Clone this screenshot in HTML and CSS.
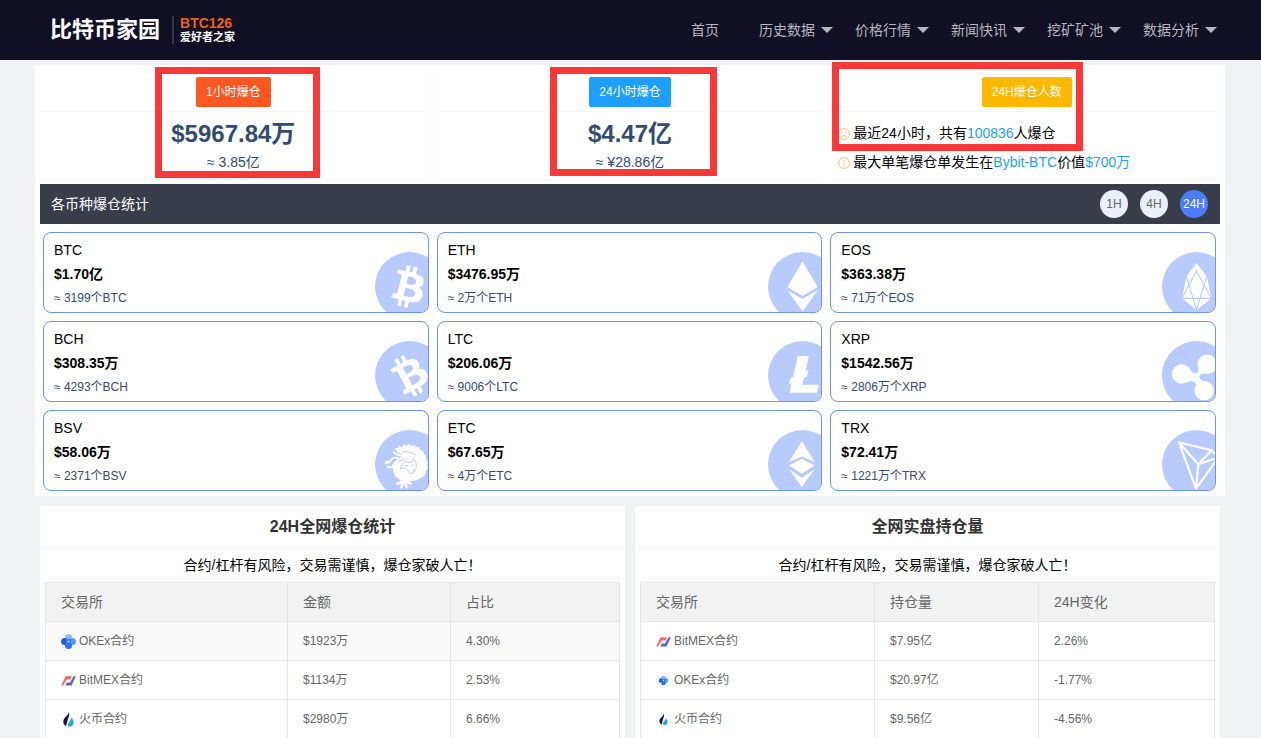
FILE: index.html
```html
<!DOCTYPE html>
<html lang="zh-CN">
<head>
<meta charset="utf-8">
<meta name="viewport" content="width=device-width, initial-scale=1">
<title>比特币家园</title>
<link rel="stylesheet" href="styles.css">
</head>
<body>
<svg class="defs" aria-hidden="true">
  <symbol id="btc" viewBox="0 0 32 32"><path d="M23.189 14.02c.314-2.096-1.283-3.223-3.465-3.975l.708-2.84-1.728-.43-.69 2.765c-.454-.114-.92-.22-1.385-.326l.695-2.783L15.596 6l-.708 2.839c-.376-.086-.746-.17-1.104-.26l.002-.009-2.384-.595-.46 1.846s1.283.294 1.256.312c.7.175.826.638.805 1.006l-.806 3.235c.048.012.11.03.18.057l-.183-.045-1.13 4.532c-.086.212-.303.531-.793.41.018.025-1.256-.313-1.256-.313l-.858 1.978 2.25.561c.418.105.828.215 1.231.318l-.715 2.872 1.727.43.708-2.84c.472.127.93.245 1.378.357l-.706 2.828 1.728.43.715-2.866c2.948.558 5.164.333 6.097-2.333.752-2.146-.037-3.385-1.588-4.192 1.13-.26 1.98-1.003 2.207-2.538zm-3.95 5.538c-.533 2.147-4.148.986-5.32.695l.95-3.805c1.172.293 4.929.872 4.37 3.11zm.535-5.569c-.487 1.953-3.495.96-4.47.717l.86-3.45c.975.243 4.118.696 3.61 2.733z"/></symbol>
  <symbol id="okex" viewBox="0 0 15 15"><circle cx="7.5" cy="3.6" r="3.5" fill="#86bbf8"/><circle cx="11.4" cy="7.5" r="3.5" fill="#5a94f4"/><circle cx="3.6" cy="7.5" r="3.5" fill="#1f5be8"/><circle cx="7.5" cy="11.4" r="3.5" fill="#2a76f8"/><path d="M5 5h5v5H5z" fill="#3577ee"/><circle cx="7.5" cy="7.5" r="1" fill="#d8e8fd"/></symbol>
  <symbol id="bitmex" viewBox="0 0 15 15"><path d="M.2 12.6 4.600 3.200h6.200L9.400 6.400H5.800L2 12.600z" fill="#ed6b6e"/><path d="M14.800 3.200 10.600 12.600H4.400l1.400-3H9L12.600 3.200z" fill="#5a69b3"/></symbol>
  <symbol id="huobi" viewBox="0 0 15 15"><path d="M7.8 0C8.6 2 8.2 3.6 7.6 5c-1 2.600-1.300 5.600-2.600 9C2.400 12.700 1.600 9.600 3 7c1.200-2.400 4.600-3.800 4.800-7z" fill="#171c3d"/><path d="M10.200 5.600c2.400 2.400 3 4.400 2.200 6.600-.7 1.700-2.300 2.600-4.800 2.500-1.300-1.700-.9-3.200.5-4.700 1.300-1.300 1.900-2.400 2.100-4.400z" fill="#2ba6de"/></symbol>
</svg>

<header class="topbar">
  <a class="logo" href="#">
    <span class="logo-name">比特币家园</span>
    <span class="logo-side"><span class="logo-code">BTC126</span><span class="logo-tag">爱好者之家</span></span>
  </a>
  <nav class="nav">
    <a class="home" href="#">首页</a>
    <a class="drop" href="#">历史数据</a>
    <a class="drop" href="#">价格行情</a>
    <a class="drop" href="#">新闻快讯</a>
    <a class="drop" href="#">挖矿矿池</a>
    <a class="drop" href="#">数据分析</a>
  </nav>
</header>

<main class="page">
  <section class="overview">
    <div class="stats">
      <article class="card stat">
        <div class="card-head"><button class="badge orange" type="button">1小时爆仓</button></div>
        <div class="stat-body"><strong class="amount">$5967.84万</strong><span class="approx">≈ 3.85亿</span></div>
        <span class="mark mark-one"></span>
      </article>
      <article class="card stat">
        <div class="card-head"><button class="badge blue" type="button">24小时爆仓</button></div>
        <div class="stat-body"><strong class="amount">$4.47亿</strong><span class="approx">≈ ¥28.86亿</span></div>
        <span class="mark mark-two"></span>
      </article>
      <article class="card stat">
        <div class="card-head"><button class="badge yellow" type="button">24H爆仓人数</button></div>
        <div class="stat-body notes">
          <p class="note"><svg class="note-icon" viewBox="0 0 12 12"><circle cx="6" cy="6" r="5.400"/><path d="M3.200 4.400h1.400M7.400 4.400h1.400M3.500 8.800Q6 5.800 8.500 8.800"/></svg><span>最近24小时，共有<em>100836</em>人爆仓</span></p>
          <p class="note"><svg class="note-icon" viewBox="0 0 12 12"><circle cx="6" cy="6" r="5.400"/><path d="M6 3v1M6 5.200v4"/></svg><span>最大单笔爆仓单发生在<em>Bybit-BTC</em>价值<em>$700万</em></span></p>
        </div>
        <span class="mark mark-three"></span>
      </article>
    </div>

    <div class="bar">
      <h2 class="bar-title">各币种爆仓统计</h2>
      <div class="periods">
        <button class="period" type="button">1H</button>
        <button class="period" type="button">4H</button>
        <button class="period active" type="button">24H</button>
      </div>
    </div>

    <div class="coins">
      <article class="coin"><h3>BTC</h3><strong>$1.70亿</strong><p>≈ 3199个BTC</p>
        <svg class="coin-icon" viewBox="0 0 32 32"><circle class="disc" cx="16" cy="16" r="16"/><use href="#btc" x="-0.7" width="32" height="32"/></svg></article>
      <article class="coin"><h3>ETH</h3><strong>$3476.95万</strong><p>≈ 2万个ETH</p>
        <svg class="coin-icon" viewBox="0 0 32 32"><circle class="disc" cx="16" cy="16" r="16"/><path d="M16 4.400 23 16.200 16 20.400 9 16.200zM9 17.700l7 4.100 7-4.100L16 27.600z"/></svg></article>
      <article class="coin"><h3>EOS</h3><strong>$363.38万</strong><p>≈ 71万个EOS</p>
        <svg class="coin-icon" viewBox="0 0 32 32"><circle class="disc" cx="16" cy="16" r="16"/><path d="M16 5.100 20.800 11.200 22.900 21.500 16 26.900 9.300 21.500 11.300 11.200z"/><path class="cut" d="M9.300 21.500 16 8.800l6.900 12.700zM11.300 11.200 16 26.900l4.800-15.700"/></svg></article>
      <article class="coin"><h3>BCH</h3><strong>$308.35万</strong><p>≈ 4293个BCH</p>
        <svg class="coin-icon" viewBox="0 0 32 32"><circle class="disc" cx="16" cy="16" r="16"/><g transform="rotate(-42 16 16)"><use href="#btc" width="32" height="32"/></g></svg></article>
      <article class="coin"><h3>LTC</h3><strong>$206.06万</strong><p>≈ 9006个LTC</p>
        <svg class="coin-icon" viewBox="0 0 32 32"><circle class="disc" cx="16" cy="16" r="16"/><path d="M11 19.500 9.600 20.100l.7-2.800 1.400-.6L13.800 7h5.100l-1.500 7.200 1.400-.6-.7 2.800-1.400.6-.8 3.300h7.700L22.700 24H9.900z"/></svg></article>
      <article class="coin"><h3>XRP</h3><strong>$1542.56万</strong><p>≈ 2806万个XRP</p>
        <svg class="coin-icon" viewBox="0 0 32 32"><circle class="disc" cx="16" cy="16" r="16"/><circle cx="9.100" cy="15.300" r="4.500"/><circle cx="21" cy="10.800" r="4.500"/><circle cx="19.500" cy="23" r="4.500"/><path d="M12.200 12.200c1.600 3.200 3.800 3 4.500 1.900.5-.9-.2-2 .3-3.500l3.500 4.200c-2.600.2-3.400 1.200-3 2.400.5 1.600 2 1.200 3.600 1.700l-5.300 4c.7-3-.3-4-2-4.400-1.500-.1-1.500 1-3 .5z"/></svg></article>
      <article class="coin"><h3>BSV</h3><strong>$58.06万</strong><p>≈ 2371个BSV</p>
        <svg class="coin-icon" viewBox="0 0 69 69"><circle class="disc" cx="34.500" cy="34.500" r="34.500"/>
          <path d="M20 18l3 0 1-2 3 1 2-3 2 2 3-2 2 2 3-1 2 2 3 0 1 3 3 1 1 3 2 2 0 3 2 3-1 3 1 3-2 3-1 4-4 3-4 2-6 1-7 0-5-2-4-3-2-5 0-4 3-6 5-4 3-1-2-2-5-2z"/>
          <path d="M27 46l6 0-1 4 5 3-1 2-4-2 1 4-2 2-2-5-2 5-2-1 1-4-5 1 0-2 5-2-3-3 4 0z"/>
          <path class="cut heavy" d="M24 31c2 0 4-1 5-3M27 35c0-3 3-4 5-3l3 1 4-4 2 4c1 4 0 8-3 10M27 35l-2 4 4-1c3 0 4 3 6 6l3-1 1-4M30 35l3 1M36 36l2-1M27 22c6-1 10 1 14 3"/>
          <path class="line" d="M24 29c-4-2-6-2-8 1-1 3-5 1-6 4M24 31c-3 0-5 2-6 5-2 3-5 1-6 0M11 31c0 2 2 2 4 1M18 22c4 3 8 4 12 4"/></svg></article>
      <article class="coin"><h3>ETC</h3><strong>$67.65万</strong><p>≈ 4万个ETC</p>
        <svg class="coin-icon" viewBox="0 0 32 32"><circle class="disc" cx="16" cy="16" r="16"/><path d="M15.700 5.100 21.600 14.700 15.700 12.300 9.800 14.700zM15.700 13.300 21.600 16.500 15.700 20.300 9.800 16.500zM9.800 18.200l5.900 4 5.900-4-5.900 8.200z"/></svg></article>
      <article class="coin"><h3>TRX</h3><strong>$72.41万</strong><p>≈ 1221万个TRX</p>
        <svg class="coin-icon" viewBox="0 0 32 32"><circle class="disc" cx="16" cy="16" r="16"/><path class="line thin" d="M7.900 5.800 23 9.400 26.200 12.700 15.800 27.200zL16.800 15.900 15.800 27.200M23 9.400 16.800 15.900 26.200 12.700"/></svg></article>
    </div>
  </section>

  <div class="panels">
    <section class="card panel">
      <h2 class="panel-title">24H全网爆仓统计</h2>
      <div class="panel-body">
        <p class="warning">合约/杠杆有风险，交易需谨慎，爆仓家破人亡！</p>
        <table class="table liquidations">
          <thead><tr><th>交易所</th><th>金额</th><th>占比</th></tr></thead>
          <tbody>
            <tr class="hovered"><td><span class="exchange"><svg><use href="#okex"/></svg>OKEx合约</span></td><td>$1923万</td><td>4.30%</td></tr>
            <tr><td><span class="exchange"><svg><use href="#bitmex"/></svg>BitMEX合约</span></td><td>$1134万</td><td>2.53%</td></tr>
            <tr><td><span class="exchange"><svg><use href="#huobi"/></svg>火币合约</span></td><td>$2980万</td><td>6.66%</td></tr>
          </tbody>
        </table>
      </div>
    </section>
    <section class="card panel">
      <h2 class="panel-title">全网实盘持仓量</h2>
      <div class="panel-body">
        <p class="warning">合约/杠杆有风险，交易需谨慎，爆仓家破人亡！</p>
        <table class="table positions">
          <thead><tr><th>交易所</th><th>持仓量</th><th>24H变化</th></tr></thead>
          <tbody>
            <tr><td><span class="exchange"><svg><use href="#bitmex"/></svg>BitMEX合约</span></td><td>$7.95亿</td><td>2.26%</td></tr>
            <tr><td><span class="exchange"><svg viewBox="0 0 15 15"><circle class="ring" cx="7.500" cy="7.500" r="7"/><use href="#okex" x="2.500" y="2.500" width="10" height="10"/></svg>OKEx合约</span></td><td>$20.97亿</td><td>-1.77%</td></tr>
            <tr><td><span class="exchange"><svg viewBox="0 0 15 15"><circle class="ring" cx="7.500" cy="7.500" r="7"/><use href="#huobi" x="1.500" y="1.500" width="12" height="12"/></svg>火币合约</span></td><td>$9.56亿</td><td>-4.56%</td></tr>
          </tbody>
        </table>
      </div>
    </section>
  </div>
</main>
</body>
</html>
```
FILE: styles.css
```css
* { box-sizing: border-box; }

body {
  margin: 0;
  background: #f0f2f4;
  color: #000;
  font: 14px/24px "Liberation Sans", "Noto Sans CJK SC", sans-serif;
}

h2, h3, p { margin: 0; font-size: 14px; font-weight: 400; }
a { color: inherit; text-decoration: none; }
button { border: 0; font-family: inherit; cursor: pointer; }
.defs { position: absolute; width: 0; height: 0; }

/* header */
.topbar {
  display: flex;
  align-items: center;
  justify-content: space-between;
  height: 60px;
  padding: 0 44px 0 50px;
  background: #110f24;
}
.logo { display: flex; align-items: center; gap: 12px; color: #fff; }
.logo-name { font-size: 22px; font-weight: 700; }
.logo-side {
  display: flex;
  flex-direction: column;
  padding-left: 6px;
  border-left: 2px solid #35334a;
  font-weight: 700;
}
.logo-code { color: #e8630c; font-size: 14px; line-height: 14px; }
.logo-tag { font-size: 11px; line-height: 14px; }
.nav { display: flex; gap: 22px; color: #b8b7bd; }
.home { margin-right: 18px; }
.drop { display: flex; align-items: center; gap: 6px; }
.drop::after {
  content: "";
  border: 6px solid transparent;
  border-top-color: currentColor;
  border-bottom: 0;
}

.page { margin: 0 36px 0 35px; padding-top: 5px; }
.overview { padding: 5px; background: #fff; }

/* summary cards */
.card { border-radius: 2px; background: #fff; box-shadow: 0 1px 2px rgba(0, 0, 0, .05); }
.stats { display: grid; grid-template-columns: repeat(3, 1fr); gap: 10px; margin-bottom: 5px; }
.stat { position: relative; height: 109px; }
.card-head {
  display: flex;
  align-items: center;
  justify-content: center;
  height: 42px;
  padding-top: 3px;
  border-bottom: 1px solid #f6f6f6;
}
.badge {
  height: 30px;
  padding: 0 10px;
  border-radius: 2px;
  color: #fff;
  font-size: 12px;
  line-height: 30px;
}
.orange { background: #ff5722; }
.blue { background: #1e9fff; }
.yellow { background: #ffb800; }
.stat-body {
  display: flex;
  flex-direction: column;
  padding: 7px 5px 2px;
  color: #324b70;
  line-height: 29px;
  text-align: center;
}
.amount { font-size: 24px; }
.notes { color: #000; text-align: left; }
.note { display: flex; align-items: center; gap: 3px; }
.note-icon { width: 12px; height: 12px; fill: none; stroke: #ffb97a; stroke-width: 1; }
.note em { color: #1e9fff; font-style: normal; }

/* highlight frames drawn over the cards */
.mark { position: absolute; border: 7px solid #fb3838; pointer-events: none; }
.mark-one { top: -3px; left: 115px; width: 165px; height: 111px; }
.mark-two { top: -3px; left: 113px; width: 167px; height: 109px; }
.mark-three { top: -8px; left: -1px; width: 251px; height: 89px; }

/* coin section */
.bar {
  display: flex;
  align-items: center;
  justify-content: space-between;
  height: 40px;
  padding: 0 12px 0 11px;
  background: #393d49;
}
.bar-title { color: #fff; }
.periods { display: flex; gap: 12px; }
.period {
  width: 28px;
  height: 28px;
  padding: 0;
  border-radius: 50%;
  background: #ebeffb;
  color: #666;
  font-size: 12px;
}
.period.active { background: #4a7dff; color: #fff; }

.coins { display: grid; grid-template-columns: repeat(3, 1fr); gap: 8px; padding: 8px 4px 0 3px; }
.coin {
  position: relative;
  overflow: hidden;
  padding: 5px 10px 2px;
  border: 1px solid #6b95e8;
  border-radius: 8px;
}
.coin strong { display: block; }
.coin p { color: #324b70; font-size: 12px; }
.coin-icon { position: absolute; top: 19px; right: -16px; width: 69px; height: 69px; fill: #fff; }
.disc { fill: #b7cbff; }
.cut { fill: none; stroke: #b7cbff; stroke-width: .5; }
.heavy { stroke-width: 1; }
.line { fill: none; stroke: #fff; stroke-width: 2; stroke-linejoin: round; }
.thin { stroke-width: 1; }

/* tables */
.panels { display: grid; grid-template-columns: 1fr 1fr; gap: 10px; padding: 10px 5px 0; }
.panel-title {
  border-bottom: 1px solid #f6f6f6;
  color: #333;
  font-size: 16px;
  font-weight: 700;
  line-height: 41px;
  text-align: center;
}
.panel-body { padding: 5px 5px 0; }
.warning { padding-bottom: 5px; text-align: center; }
.table { width: 100%; border-collapse: collapse; table-layout: fixed; color: #666; font-size: 12px; }
.table th, .table td {
  height: 39px;
  padding: 0 15px;
  border: 1px solid #e6e6e6;
  line-height: 20px;
  text-align: left;
}
.table th { background: #f2f2f2; font-size: 14px; font-weight: 400; }
.table tbody tr:last-child td { border-bottom: 0; }
.liquidations th:first-child { width: 242px; }
.liquidations th:nth-child(2) { width: 163px; }
.positions th:first-child { width: 234px; }
.positions th:nth-child(2) { width: 164px; }
.hovered { background: #fafafa; }
.exchange { display: flex; align-items: center; gap: 3px; }
.exchange svg { width: 15px; height: 15px; }
.ring { fill: #fff; stroke: #eceff3; stroke-width: 1; }
```
